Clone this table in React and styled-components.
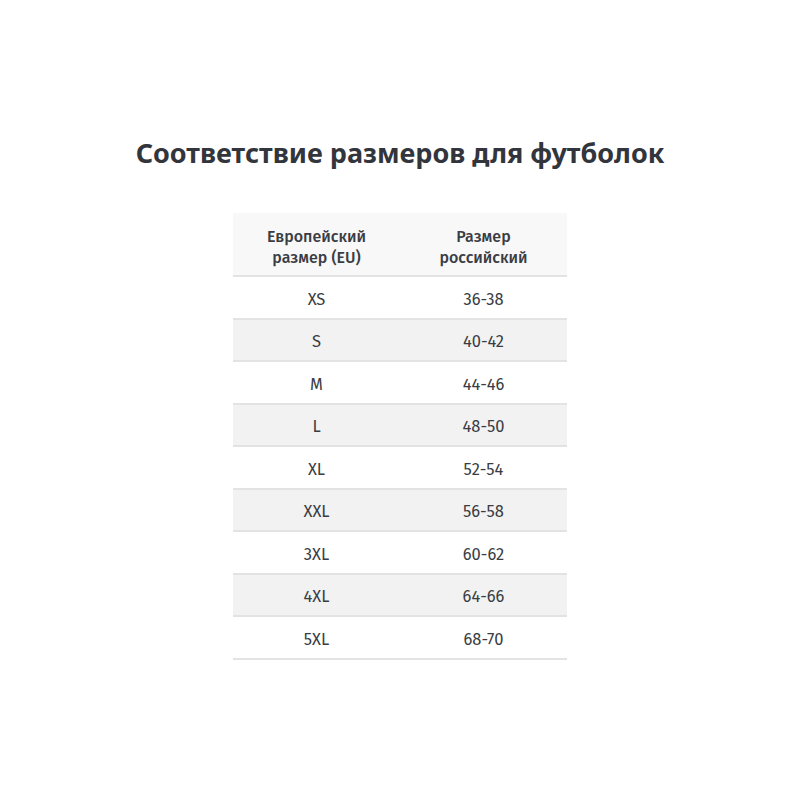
import React from 'react';
import styled, { createGlobalStyle } from 'styled-components';

const GlobalStyle = createGlobalStyle`
  body {
    margin: 0;
    background: #ffffff;
  }
`;

const sizes = [
  ['XS', '36-38'],
  ['S', '40-42'],
  ['M', '44-46'],
  ['L', '48-50'],
  ['XL', '52-54'],
  ['XXL', '56-58'],
  ['3XL', '60-62'],
  ['4XL', '64-66'],
  ['5XL', '68-70'],
];

export default function App() {
  return (
    <>
      <GlobalStyle />
      <Page>
        <Title>Соответствие размеров для футболок</Title>
        <Table>
          <HeadRow>
            <Cell>Европейский<br />размер (EU)</Cell>
            <Cell>Размер<br />российский</Cell>
          </HeadRow>
          {sizes.map(([eu, ru], i) => (
            <Row key={eu} $shaded={i % 2 === 1}>
              <Cell>{eu}</Cell>
              <Cell>{ru}</Cell>
            </Row>
          ))}
        </Table>
      </Page>
    </>
  );
}

const Page = styled.div({
  width: '800px',
  height: '800px',
  display: 'flex',
  flexDirection: 'column',
  alignItems: 'center',
  paddingTop: '135px',
  boxSizing: 'border-box',
});

const Title = styled.h1({
  margin: 0,
  fontFamily: '"Noto Sans", sans-serif',
  fontWeight: 700,
  fontSize: '27px',
  lineHeight: '36px',
  color: '#33353d',
});

const Table = styled.div({
  marginTop: '42px',
  width: '334px',
  display: 'flex',
  flexDirection: 'column',
  fontFamily: '"Fira Sans", "Open Sans", sans-serif',
  color: '#3a3d44',
});

const Row = styled.div`
  display: grid;
  grid-template-columns: 1fr 1fr;
  align-items: center;
  box-sizing: border-box;
  height: 42.5px;
  padding-top: 4px;
  background: ${(p) => (p.$shaded ? '#f2f2f2' : '#ffffff')};
  border-bottom: 2px solid #e3e3e3;
  font-size: 16.5px;
`;

const HeadRow = styled(Row)`
  height: 64px;
  padding-top: 5px;
  background: #f8f8f8;
  font-weight: 500;
  font-size: 16px;
  line-height: 21px;
`;

const Cell = styled.div`
  text-align: center;
`;
